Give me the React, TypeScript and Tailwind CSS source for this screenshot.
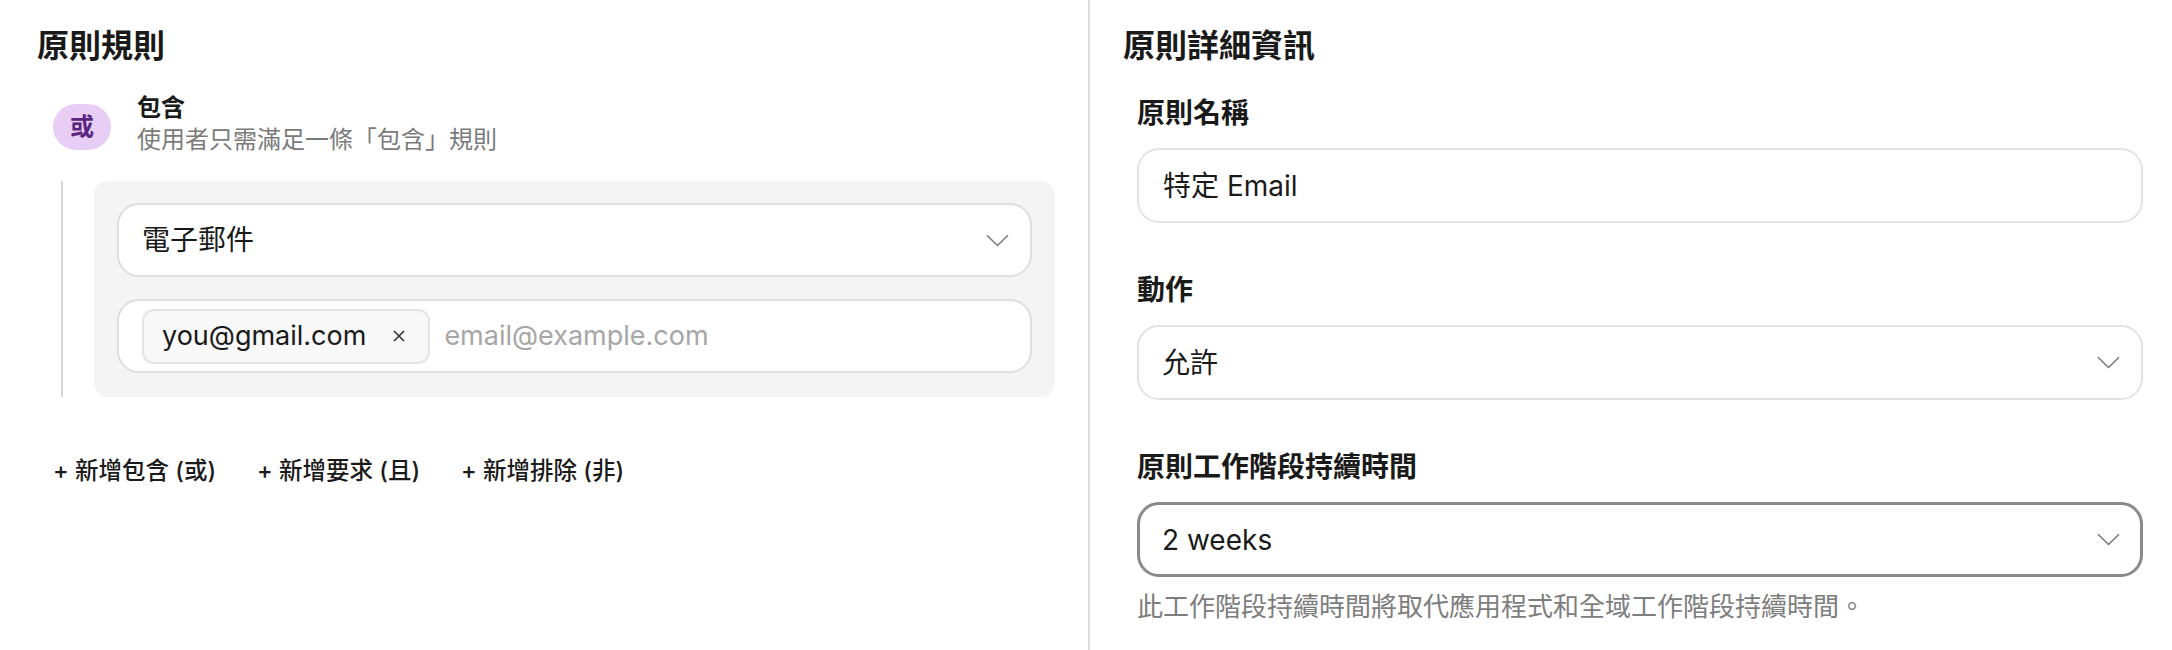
import React from "react";

function Chevron() {
    return (
        <svg width="23" height="13" viewBox="0 0 23 13" fill="none" className="shrink-0">
            <path d="M1 1.2 L11.5 11.5 L22 1.2" stroke="#7a7a7a" strokeWidth="1.6" />
        </svg>
    );
}

function SelectBox({ value, focused }: { value: string; focused?: boolean }) {
    return (
        <div
            className={
                focused
                    ? "h-[75px] rounded-[22px] border-[3px] border-[#8a8a8a] bg-white flex items-center justify-between pl-[22px] pr-[20px]"
                    : "h-[75px] rounded-[22px] border-2 border-[#e3e3e3] bg-white flex items-center justify-between pl-[23px] pr-[21px]"
            }
        >
            <span className="text-[28px] leading-[36px]">{value}</span>
            <Chevron />
        </div>
    );
}

function Field({ label, children }: { label: string; children: React.ReactNode }) {
    return (
        <div className="flex flex-col">
            <label className="text-[28px] leading-[40px] font-semibold mb-[15px]">{label}</label>
            {children}
        </div>
    );
}

export default function App() {
    return (
        <main className="flex w-[2172px] h-[650px] bg-white text-[#1a1a1a] font-['Inter','Noto_Sans_CJK_TC',sans-serif]">
            {/* rules */}
            <section className="w-[1088px] shrink-0 pl-[37px] pr-[33px] pt-[26px]">
                <h2 className="text-[32px] leading-[40px] font-bold">原則規則</h2>

                <div className="ml-4 mt-[26px]">
                    <div className="flex items-start gap-[26px]">
                        <div className="mt-[12px] w-[58px] h-[46px] rounded-full bg-[#e8cef4] flex items-center justify-center text-[24px] font-bold text-[#5b2480]">
                            或
                        </div>
                        <div>
                            <div className="text-[24px] leading-[32px] font-semibold">包含</div>
                            <div className="text-[24px] leading-[32px] text-[#7a7a7a]">使用者只需滿足一條「包含」規則</div>
                        </div>
                    </div>

                    <div className="mt-[25px] ml-2 border-l-2 border-[#d6d6d6] pl-[31px]">
                        <div className="bg-[#f4f4f4] rounded-[14px] pt-[22px] pb-[24px] px-[23px] flex flex-col gap-[22px]">
                            <div className="h-[74px] rounded-[22px] border-2 border-[#dedede] bg-white flex items-center justify-between pl-[23px] pr-[21px]">
                                <span className="text-[28px] leading-[36px]">電子郵件</span>
                                <Chevron />
                            </div>
                            <div className="h-[74px] rounded-[22px] border-2 border-[#dedede] bg-white flex items-center gap-[14px] pl-[23px] pr-[21px]">
                                <div className="h-[55px] rounded-[12px] border-2 border-[#e4e4e4] bg-[#f8f8f8] flex items-center gap-[27px] pl-[18px] pr-[23px]">
                                    <span className="text-[27px] leading-[34px]">you@gmail.com</span>
                                    <svg width="12" height="12" viewBox="0 0 12 12" fill="none">
                                        <path d="M1 1 L11 11 M11 1 L1 11" stroke="#333" strokeWidth="1.6" />
                                    </svg>
                                </div>
                                <span className="text-[27px] leading-[34px] text-[#a6a6a6]">email@example.com</span>
                            </div>
                        </div>
                    </div>

                    <div className="mt-[58px] flex gap-[41px] text-[23.5px] leading-[32px] font-medium">
                        <button>+ 新增包含 (或)</button>
                        <button>+ 新增要求 (且)</button>
                        <button>+ 新增排除 (非)</button>
                    </div>
                </div>
            </section>

            <div className="w-[2px] bg-[#dadada] self-stretch" />

            {/* details */}
            <section className="flex-1 pl-[33px] pr-[29px] pt-[26px]">
                <h2 className="text-[32px] leading-[40px] font-bold">原則詳細資訊</h2>

                <div className="pl-[14px] mt-[27px] flex flex-col gap-[47px]">
                    <Field label="原則名稱">
                        <div className="h-[75px] rounded-[22px] border-2 border-[#e3e3e3] bg-white flex items-center pl-[24px]">
                            <span className="text-[28px] leading-[36px]">特定 Email</span>
                        </div>
                    </Field>
                    <Field label="動作">
                        <SelectBox value="允許" />
                    </Field>
                    <div className="flex flex-col">
                        <Field label="原則工作階段持續時間">
                            <SelectBox value="2 weeks" focused />
                        </Field>
                        <p className="mt-[12px] text-[26px] leading-[36px] text-[#7d7d7d]">
                            此工作階段持續時間將取代應用程式和全域工作階段持續時間。
                        </p>
                    </div>
                </div>
            </section>
        </main>
    );
}
